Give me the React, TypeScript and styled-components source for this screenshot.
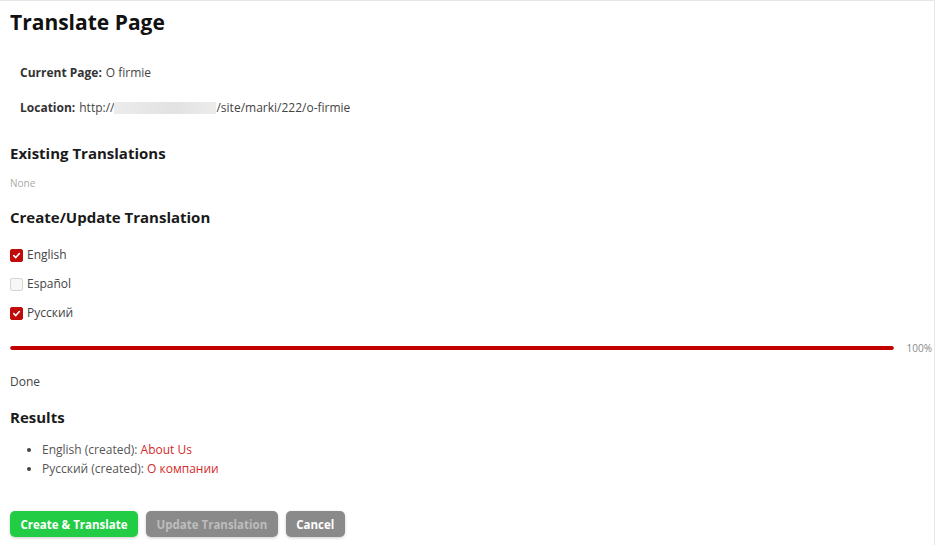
import React from "react";
import styled, { createGlobalStyle } from "styled-components";

const GlobalStyle = createGlobalStyle`
  html, body {
    margin: 0;
    padding: 0;
    background: #ffffff;
  }
  body {
    font-family: "Open Sans", "Noto Sans", sans-serif;
    color: #333;
  }
`;

const Panel = styled.div`
  width: 935px;
  height: 545px;
  box-sizing: border-box;
  border-top: 1px solid #e6e6e6;
  border-right: 1px solid #e6e6e6;
  padding: 7px 10px 0 10px;
  overflow: hidden;
`;

const Title = styled.h1`
  margin: 0;
  font-size: 21px;
  line-height: 28px;
  font-weight: 700;
  color: #111;
`;

const InfoBlock = styled.div`
  padding: 27px 0 0 10px;
  display: flex;
  flex-direction: column;
  gap: 16px;
`;

const InfoRow = styled.div`
  font-size: 12px;
  line-height: 19px;
  color: #444;
  display: flex;
  align-items: center;

  b {
    color: #333;
    margin-right: 4px;
  }
`;

const Redacted = styled.span`
  display: inline-block;
  width: 102px;
  height: 12px;
  background: linear-gradient(90deg, #ececec, #e2e2e2 60%, #ececec);
`;

const SectionTitle = styled.h2<{ $top: number }>`
  margin: ${(p) => p.$top}px 0 0 0;
  font-size: 15px;
  line-height: 22px;
  font-weight: 700;
  color: #1a1a1a;
`;

const Muted = styled.div`
  margin-top: 13px;
  font-size: 10px;
  line-height: 13px;
  color: #aaa;
`;

const CheckList = styled.div`
  margin-top: 18px;
  display: flex;
  flex-direction: column;
  gap: 11px;
`;

const CheckRow = styled.label`
  display: flex;
  align-items: center;
  gap: 4px;
  font-size: 12px;
  line-height: 18px;
  color: #444;
`;

const Box = styled.span<{ $checked: boolean }>`
  width: 13px;
  height: 13px;
  box-sizing: border-box;
  border-radius: 2px;
  display: flex;
  align-items: center;
  justify-content: center;
  background: ${(p) => (p.$checked ? "#c10a0a" : "#f7f7f7")};
  border: 1px solid ${(p) => (p.$checked ? "#c10a0a" : "#d6d6d6")};
`;

const ProgressRow = styled.div`
  margin-top: 19px;
  display: flex;
  align-items: center;
  gap: 13px;
`;

const Track = styled.div`
  flex: 1;
  height: 4px;
  border-radius: 2px;
  background: #eee;
  overflow: hidden;
`;

const Fill = styled.div`
  height: 100%;
  background: #c10000;
  border-radius: 2px;
`;

const Percent = styled.span`
  font-size: 10px;
  color: #888;
  margin-right: -8px;
`;

const Status = styled.div`
  margin-top: 18px;
  font-size: 12px;
  line-height: 18px;
  color: #444;
`;

const ResultList = styled.ul`
  margin: 12px 0 0 0;
  padding-left: 32px;
  font-size: 12px;
  line-height: 19px;
  color: #555;

  li::marker {
    color: #444;
  }
`;

const ResultLink = styled.a`
  color: #d42a2a;
  text-decoration: none;
`;

const Actions = styled.div`
  margin-top: 33px;
  display: flex;
  gap: 8px;
`;

const Button = styled.button<{ $variant: "primary" | "muted" | "secondary" }>`
  height: 26px;
  padding: 0 10.5px;
  border: none;
  border-radius: 5px;
  font-family: inherit;
  font-size: 11.5px;
  font-weight: 700;
  cursor: pointer;
  box-shadow: 0 1px 3px rgba(0, 0, 0, 0.2);
  background: ${(p) => (p.$variant === "primary" ? "#22cc44" : "#8a8a8a")};
  color: ${(p) => (p.$variant === "muted" ? "#bdbdbd" : "#ffffff")};
`;

const Check = () => (
  <svg width="9" height="9" viewBox="0 0 10 10">
    <path d="M2 5.2 L4.2 7.3 L8.2 2.8" fill="none" stroke="#fff" strokeWidth="1.8" strokeLinecap="round" strokeLinejoin="round" />
  </svg>
);

const languages = [
  { name: "English", checked: true },
  { name: "Español", checked: false },
  { name: "Русский", checked: true },
];

const results = [
  { lang: "English", link: "About Us" },
  { lang: "Русский", link: "О компании" },
];

export default function App() {
  return (
    <>
      <GlobalStyle />
      <Panel>
        <Title>Translate Page</Title>
        <InfoBlock>
          <InfoRow>
            <b>Current Page:</b> O firmie
          </InfoRow>
          <InfoRow>
            <b>Location:</b> http://
            <Redacted />
            /site/marki/222/o-firmie
          </InfoRow>
        </InfoBlock>

        <SectionTitle $top={25}>Existing Translations</SectionTitle>
        <Muted>None</Muted>

        <SectionTitle $top={16}>Create/Update Translation</SectionTitle>
        <CheckList>
          {languages.map((l) => (
            <CheckRow key={l.name}>
              <Box $checked={l.checked}>{l.checked && <Check />}</Box>
              {l.name}
            </CheckRow>
          ))}
        </CheckList>

        <ProgressRow>
          <Track>
            <Fill style={{ width: "100%" }} />
          </Track>
          <Percent>100%</Percent>
        </ProgressRow>

        <Status>Done</Status>

        <SectionTitle $top={15}>Results</SectionTitle>
        <ResultList>
          {results.map((r) => (
            <li key={r.lang}>
              {r.lang} (created): <ResultLink href="#">{r.link}</ResultLink>
            </li>
          ))}
        </ResultList>

        <Actions>
          <Button $variant="primary">Create &amp; Translate</Button>
          <Button $variant="muted">Update Translation</Button>
          <Button $variant="secondary">Cancel</Button>
        </Actions>
      </Panel>
    </>
  );
}
